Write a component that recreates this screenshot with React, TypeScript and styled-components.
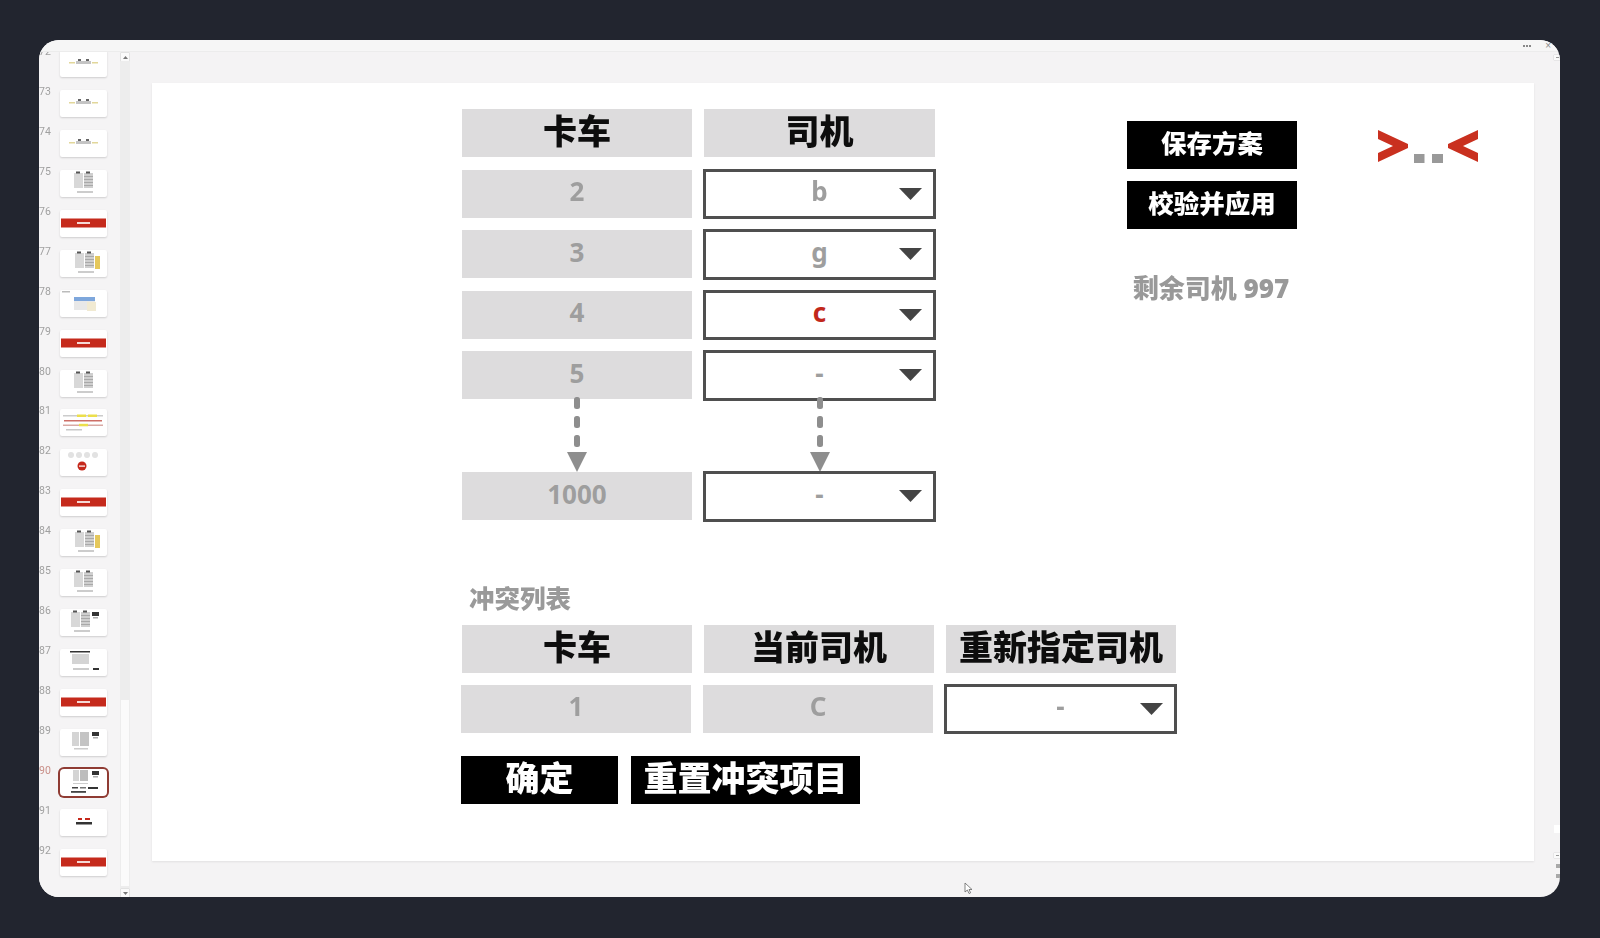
import React from "react";
import styled, { createGlobalStyle } from "styled-components";

const FONT = `"Noto Sans CJK SC", "Noto Sans", sans-serif`;
const LATIN = `"Noto Sans", "Noto Sans CJK SC", sans-serif`;

const Global = createGlobalStyle`
  html, body { margin: 0; padding: 0; background: #22252f; }
  * { box-sizing: border-box; }
`;

const Page = styled.div`
  width: 1600px;
  height: 938px;
  padding: 40px 40px 41px 39px;
  background: #22252f;
  font-family: ${FONT};
`;
const Window = styled.div`
  position: relative;
  height: 857px;
  border-radius: 20px;
  overflow: hidden;
  background: #f4f3f4;
  display: flex;
  flex-direction: column;
`;
const TitleBar = styled.div`
  height: 12px;
  flex: none;
  background: #f6f6f6;
  border-bottom: 1px solid #ececec;
  display: flex;
  align-items: center;
  justify-content: flex-end;
  gap: 14px;
  padding-right: 9px;
`;
const Dots = styled.span`
  display: flex;
  gap: 1px;
  i { width: 2px; height: 2px; background: #888; display: block; }
`;
const Close = styled.span`
  font: 10px/10px "Liberation Sans", sans-serif;
  color: #888;
`;
const Body = styled.div`
  flex: 1;
  min-height: 0;
  display: flex;
`;
const Sidebar = styled.div`
  width: 81px;
  flex: none;
  overflow: hidden;
  background: #f5f4f5;
`;
const ThumbList = styled.div`
  margin-top: -2px;
  display: flex;
  flex-direction: column;
  gap: 12.95px;
`;
const ThumbRow = styled.div`
  display: flex;
  align-items: flex-start;
  height: 27px;
  flex: none;
`;
const ThumbNumber = styled.span<{ $active?: boolean }>`
  width: 21px;
  flex: none;
  font: 10.5px/10px Roboto, sans-serif;
  color: ${(p) => (p.$active ? "#c98f88" : "#a0a0a0")};
  margin-top: -3px;
  filter: blur(0.3px);
`;
const ThumbCard = styled.div<{ $active?: boolean }>`
  width: 47px;
  height: 27px;
  background: #fff;
  border-radius: ${(p) => (p.$active ? "4px" : "2px")};
  box-shadow: ${(p) =>
    p.$active ? "0 0 0 2px #8f3b33" : "0 1px 2px rgba(0,0,0,.16)"};
  svg { display: block; filter: blur(0.5px); }
`;
const ScrollColumn = styled.div`
  width: 10px;
  flex: none;
  background: #ededed;
  display: flex;
  flex-direction: column;
  align-items: center;
  padding-top: 1px;
`;
const ScrollBtn = styled.div`
  width: 8px;
  height: 8px;
  flex: none;
  background: #fafafa;
  box-shadow: 0 0 1px rgba(0,0,0,.25);
  display: flex;
  align-items: center;
  justify-content: center;
  svg { display: block; }
`;
const ScrollTrack = styled.div`
  flex: 1;
  width: 8px;
  display: flex;
  flex-direction: column;
  justify-content: flex-end;
  padding-bottom: 3px;
  background: #ededed;
`;
const ScrollThumb = styled.div`
  height: 186px;
  background: #fbfbfb;
`;
const Workspace = styled.div`
  flex: 1;
  min-width: 0;
  display: flex;
  padding: 31px 0 36px 22px;
`;
const Slide = styled.div`
  width: 1382px;
  flex: none;
  background: #fff;
  box-shadow: 0 1px 2px rgba(0,0,0,.08);
  padding: 26px 0 0 310px;
  filter: blur(0.35px);
`;
const TopArea = styled.div`
  display: flex;
  align-items: flex-start;
`;
const MainTable = styled.div`
  width: 473px;
  flex: none;
  display: grid;
  grid-template-columns: 230px 231px;
  grid-auto-rows: 48px;
  column-gap: 12px;
  row-gap: 12.5px;
`;
const HeadCell = styled.div`
  background: #dddcdd;
  display: flex;
  align-items: center;
  justify-content: center;
  font-size: 34px;
  line-height: 1;
  font-weight: 900;
  color: #0d0d0d;
  white-space: nowrap;
  padding-bottom: 7px;
`;
const NumCell = styled.div`
  background: #dddcdd;
  display: flex;
  align-items: center;
  justify-content: center;
  font-family: ${LATIN};
  font-size: 26px;
  line-height: 1;
  font-weight: 700;
  color: #9e9e9e;
  padding-bottom: 5px;
`;
const ConflictCell = styled(NumCell)`
  margin: 0 1px 0 -1px;
`;
const Select = styled.div`
  margin: -1px -1px -1.5px -1px;
  border: 3px solid #4f4f4f;
  background: #fff;
  display: grid;
  grid-template-columns: 1fr auto 1fr;
  align-items: center;
  padding: 0 11px 0 11px;
`;
const ConflictSelect = styled(Select)`
  margin: -1px -1px -1.5px -2px;
`;
const SelectValue = styled.span<{ $alert?: boolean }>`
  grid-column: 2;
  font-family: ${LATIN};
  font-size: 26px;
  line-height: 1;
  font-weight: 700;
  color: ${(p) => (p.$alert ? "#c2281b" : "#9e9e9e")};
  padding-bottom: 5px;
`;
const Caret = styled.svg`
  grid-column: 3;
  justify-self: end;
  display: block;
`;
const Connector = styled.div`
  display: flex;
  justify-content: center;
  margin-top: -15px;
  height: 76px;
  svg { display: block; }
`;
const RightPanel = styled.div`
  margin-left: 192px;
  margin-top: 12px;
  width: 170px;
  flex: none;
  display: flex;
  flex-direction: column;
  gap: 12px;
`;
const SmallButton = styled.div`
  height: 48px;
  background: #000;
  color: #fff;
  display: flex;
  align-items: center;
  justify-content: center;
  font-size: 25.5px;
  font-weight: 900;
  line-height: 1;
  white-space: nowrap;
  padding-bottom: 6px;
`;
const Remaining = styled.div`
  margin-top: 32px;
  margin-left: -2px;
  font-family: ${LATIN};
  font-size: 26px;
  line-height: 30px;
  font-weight: 900;
  color: #999;
  text-align: center;
  white-space: nowrap;
`;
const LogoMark = styled.svg`
  display: block;
  flex: none;
  margin-left: 81px;
  margin-top: 21px;
`;
const Conflict = styled.div`
  margin-top: 62px;
`;
const ConflictTitle = styled.div`
  height: 30px;
  margin: 0 0 13px 7px;
  font-size: 25.5px;
  line-height: 30px;
  font-weight: 900;
  color: #9a9a9a;
`;
const ConflictTable = styled.div`
  display: grid;
  grid-template-columns: repeat(3, 230px);
  grid-auto-rows: 48px;
  column-gap: 12px;
  row-gap: 11.5px;
`;
const Actions = styled.div`
  display: flex;
  gap: 13px;
  margin: 23px 0 0 -1px;
`;
const BigButton = styled.div<{ $w: number }>`
  width: ${(p) => p.$w}px;
  height: 48px;
  background: #000;
  color: #fff;
  display: flex;
  align-items: center;
  justify-content: center;
  font-size: 34px;
  font-weight: 900;
  line-height: 1;
  white-space: nowrap;
  padding-bottom: 6px;
`;
const RightRail = styled.div`
  width: 6px;
  margin-left: 20px;
  margin-top: -28px;
  margin-bottom: -17px;
  flex: none;
  display: flex;
  flex-direction: column;
  align-items: flex-end;
`;
const RailBtn = styled.div<{ $gap?: number }>`
  width: 6px;
  height: 5px;
  flex: none;
  margin-top: ${(p) => p.$gap ?? 0}px;
  background: #fafafa;
  box-shadow: 0 0 1px rgba(0,0,0,.3);
  display: flex;
  align-items: center;
  justify-content: center;
  &::after { content: ""; width: 3px; height: 1px; background: #999; }
`;
const RailThumb = styled.div`
  width: 6px;
  height: 8px;
  margin-top: auto;
  background: #fff;
`;
const RailMark = styled.div`
  width: 4px;
  height: 4px;
  margin-top: 6px;
  background: #a8a8a8;
`;
const Pointer = styled.svg`
  position: absolute;
  left: 925px;
  top: 842px;
`;

const CaretIcon = () => (
  <Caret width="23" height="12" viewBox="0 0 23 12">
    <path d="M0 0H23L11.5 12Z" fill="#444" />
  </Caret>
);

const DashArrow = () => (
  <svg width="20" height="76" viewBox="0 0 20 76">
    <g fill="#8e8e8e">
      <rect x="7" y="0" width="6" height="12" rx="2.5" />
      <rect x="7" y="19" width="6" height="12" rx="2.5" />
      <rect x="7" y="38" width="6" height="12" rx="2.5" />
      <path d="M0 55H20L10 75Z" />
    </g>
  </svg>
);

const Table = ({ x }: { x: number }) => (
  <g>
    <rect x={x} y="3" width="9" height="15" fill="#d8d8d8" />
    <rect x={x + 10} y="3" width="9" height="15" fill="#cfcfcf" />
    <rect x={x + 2} y="1.5" width="4" height="2" fill="#555" />
    <rect x={x + 12} y="1.5" width="4" height="2" fill="#555" />
    {[6, 9, 12, 15].map((y) => (
      <rect key={y} x={x + 10} y={y} width="9" height="0.7" fill="#999" />
    ))}
    <rect x={x + 3} y="21" width="16" height="2" fill="#ccc" />
  </g>
);

const Banner = () => (
  <g>
    <rect x="1" y="8.5" width="45" height="9" fill="#c52a1c" />
    <rect x="17" y="12" width="13" height="2" fill="#f5d9d5" />
  </g>
);

const art: Record<string, React.ReactNode> = {
  row: (
    <g>
      <rect x="9" y="12" width="6" height="1.5" fill="#e2d79a" />
      <rect x="32" y="12" width="6" height="1.5" fill="#e2d79a" />
      <rect x="16" y="11" width="15" height="3" fill="#c4c4c4" />
      <rect x="18" y="9" width="3" height="2" fill="#666" />
      <rect x="26" y="9" width="3" height="2" fill="#666" />
    </g>
  ),
  table: <Table x={14} />,
  tableYellow: (
    <g>
      <Table x={15} />
      <rect x="35" y="6" width="5" height="13" fill="#e5c85c" />
    </g>
  ),
  banner: <Banner />,
  window: (
    <g>
      <rect x="2" y="1" width="8" height="1.5" fill="#bbb" />
      <rect x="14" y="7" width="21" height="4" fill="#7ea7dc" />
      <rect x="14" y="11" width="21" height="9" fill="#e8e8e8" />
      <rect x="27" y="12" width="9" height="9" fill="#f1ead2" />
    </g>
  ),
  text: (
    <g>
      <rect x="3" y="6" width="40" height="1.5" fill="#ccc" />
      <rect x="17" y="5.5" width="9" height="2.5" fill="#ecdf4c" />
      <rect x="28" y="5.5" width="9" height="2.5" fill="#ecdf4c" />
      <rect x="4" y="11" width="38" height="1.5" fill="#cd6e66" />
      <rect x="3" y="15.5" width="40" height="1.5" fill="#d9a9a4" />
      <rect x="19" y="14.8" width="9" height="2.5" fill="#ecdf4c" />
      <rect x="6" y="20" width="16" height="1.5" fill="#c8c8c8" />
    </g>
  ),
  circles: (
    <g>
      <circle cx="11" cy="6" r="3" fill="#e2e2e2" />
      <circle cx="19" cy="6" r="3" fill="#e2e2e2" />
      <circle cx="27" cy="6" r="3" fill="#e2e2e2" />
      <circle cx="35" cy="6" r="3" fill="#e2e2e2" />
      <circle cx="22" cy="17" r="4.5" fill="#c5281b" />
      <rect x="19" y="16.5" width="6" height="1.2" fill="#fff" />
    </g>
  ),
  tableIcon: (
    <g>
      <Table x={11} />
      <rect x="32" y="3" width="7" height="4" fill="#333" />
      <rect x="33" y="8" width="5" height="1.5" fill="#aaa" />
    </g>
  ),
  tableFoot: (
    <g>
      <rect x="10" y="2" width="20" height="1.5" fill="#333" />
      <rect x="12" y="5" width="17" height="10" fill="#d4d4d4" />
      <rect x="13" y="19" width="16" height="2" fill="#ccc" />
      <rect x="33" y="19" width="6" height="2" fill="#333" />
    </g>
  ),
  tableIconLow: (
    <g>
      <rect x="12" y="3" width="7" height="14" fill="#d4d4d4" />
      <rect x="20" y="3" width="9" height="14" fill="#c4c4c4" />
      <rect x="32" y="3" width="7" height="4" fill="#333" />
      <rect x="33" y="8" width="5" height="1.5" fill="#aaa" />
      <rect x="14" y="19" width="14" height="1.5" fill="#ccc" />
    </g>
  ),
  current: (
    <g>
      <rect x="13" y="1" width="6" height="11" fill="#d4d4d4" />
      <rect x="20" y="1" width="8" height="11" fill="#bdbdbd" />
      <rect x="32" y="2" width="7" height="4" fill="#333" />
      <rect x="33" y="7" width="5" height="1.5" fill="#aaa" />
      <rect x="13" y="14" width="15" height="1" fill="#ccc" />
      <rect x="12" y="18" width="6" height="1.5" fill="#444" />
      <rect x="20" y="18" width="6" height="1.5" fill="#777" />
      <rect x="28" y="18" width="10" height="2" fill="#333" />
      <rect x="11" y="22" width="15" height="1.8" fill="#444" />
    </g>
  ),
  redTitle: (
    <g>
      <rect x="18" y="9" width="4" height="2" fill="#c5281b" />
      <rect x="25" y="9" width="5" height="2" fill="#c5281b" />
      <rect x="16" y="13" width="16" height="2.5" fill="#333" />
    </g>
  ),
};

const slides: [number, string][] = [
  [72, "row"], [73, "row"], [74, "row"], [75, "table"], [76, "banner"],
  [77, "tableYellow"], [78, "window"], [79, "banner"], [80, "table"],
  [81, "text"], [82, "circles"], [83, "banner"], [84, "tableYellow"],
  [85, "table"], [86, "tableIcon"], [87, "tableFoot"], [88, "banner"],
  [89, "tableIconLow"], [90, "current"], [91, "redTitle"], [92, "banner"],
];

const drivers: [string, string, boolean?][] = [
  ["2", "b"],
  ["3", "g"],
  ["4", "c", true],
  ["5", "-"],
];

export default function App() {
  return (
    <Page>
      <Global />
      <Window>
        <TitleBar>
          <Dots><i /><i /><i /></Dots>
          <Close>×</Close>
        </TitleBar>
        <Body>
          <Sidebar>
            <ThumbList>
              {slides.map(([n, kind]) => (
                <ThumbRow key={n}>
                  <ThumbNumber $active={n === 90}>{n}</ThumbNumber>
                  <ThumbCard $active={n === 90}>
                    <svg width="47" height="27" viewBox="0 0 47 27">{art[kind]}</svg>
                  </ThumbCard>
                </ThumbRow>
              ))}
            </ThumbList>
          </Sidebar>
          <ScrollColumn>
            <ScrollBtn>
              <svg width="5" height="3" viewBox="0 0 5 3"><path d="M2.5 0L5 3H0Z" fill="#777" /></svg>
            </ScrollBtn>
            <ScrollTrack><ScrollThumb /></ScrollTrack>
            <ScrollBtn>
              <svg width="5" height="3" viewBox="0 0 5 3"><path d="M0 0H5L2.5 3Z" fill="#777" /></svg>
            </ScrollBtn>
          </ScrollColumn>
          <Workspace>
            <Slide>
              <TopArea>
                <MainTable>
                  <HeadCell>卡车</HeadCell>
                  <HeadCell>司机</HeadCell>
                  {drivers.map(([truck, driver, alert]) => (
                    <React.Fragment key={truck}>
                      <NumCell>{truck}</NumCell>
                      <Select>
                        <SelectValue $alert={alert}>{driver}</SelectValue>
                        <CaretIcon />
                      </Select>
                    </React.Fragment>
                  ))}
                  <Connector><DashArrow /></Connector>
                  <Connector><DashArrow /></Connector>
                  <NumCell>1000</NumCell>
                  <Select>
                    <SelectValue>-</SelectValue>
                    <CaretIcon />
                  </Select>
                </MainTable>
                <RightPanel>
                  <SmallButton>保存方案</SmallButton>
                  <SmallButton>校验并应用</SmallButton>
                  <Remaining>剩余司机 997</Remaining>
                </RightPanel>
                <LogoMark width="100" height="34" viewBox="0 0 100 34">
                  <path d="M0 0L30 14V18L0 32V23L15 16L0 9Z" fill="#c9301f" />
                  <path d="M100 0L70 14V18L100 32V23L85 16L100 9Z" fill="#c9301f" />
                  <rect x="36" y="24" width="10.5" height="9" fill="#999" />
                  <rect x="54" y="24" width="11" height="9" fill="#999" />
                </LogoMark>
              </TopArea>
              <Conflict>
                <ConflictTitle>冲突列表</ConflictTitle>
                <ConflictTable>
                  <HeadCell>卡车</HeadCell>
                  <HeadCell>当前司机</HeadCell>
                  <HeadCell>重新指定司机</HeadCell>
                  <ConflictCell>1</ConflictCell>
                  <ConflictCell>C</ConflictCell>
                  <ConflictSelect>
                    <SelectValue>-</SelectValue>
                    <CaretIcon />
                  </ConflictSelect>
                </ConflictTable>
                <Actions>
                  <BigButton $w={157}>确定</BigButton>
                  <BigButton $w={229}>重置冲突项目</BigButton>
                </Actions>
              </Conflict>
            </Slide>
            <RightRail>
              <RailBtn />
              <RailThumb />
              <RailBtn $gap={20} />
              <RailMark />
              <RailMark />
            </RightRail>
          </Workspace>
        </Body>
        <Pointer width="10" height="13" viewBox="0 0 10 13">
          <path d="M1 1V10L3.4 8L5 11.5L6.6 10.8L5 7.5H8Z" fill="#fff" stroke="#666" strokeWidth="0.8" />
        </Pointer>
      </Window>
    </Page>
  );
}
